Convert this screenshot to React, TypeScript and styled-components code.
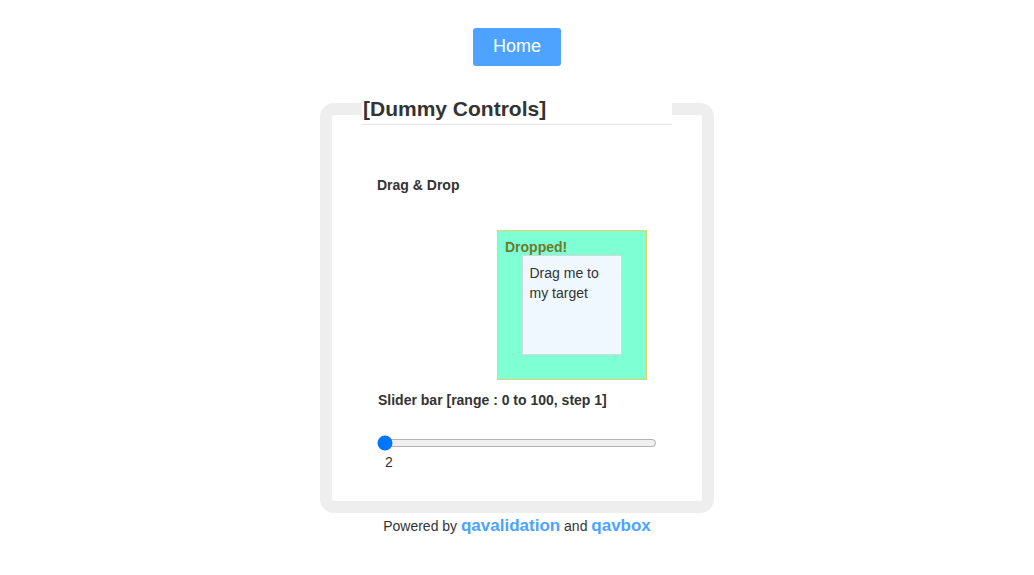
import React, { useState } from "react";
import styled, { createGlobalStyle } from "styled-components";

const GlobalStyle = createGlobalStyle`
  html, body {
    margin: 0;
    padding: 0;
    background: #ffffff;
  }
  body {
    font-family: "Liberation Sans", Arial, sans-serif;
    color: #333333;
  }
`;

function App() {
  const [sliderValue, setSliderValue] = useState(0);

  return (
    <Page>
      <GlobalStyle />
      <TopBar>
        <HomeButton type="button">Home</HomeButton>
      </TopBar>

      <ControlsFieldset>
        <Legend>[Dummy Controls]</Legend>

        <Section>
          <SectionLabel>Drag &amp; Drop</SectionLabel>
          <DragRow>
            <SourceSlot />
            <DropTarget>
              <DropStatus>Dropped!</DropStatus>
              <DraggableBox draggable>Drag me to my target</DraggableBox>
            </DropTarget>
          </DragRow>
        </Section>

        <Section>
          <SliderLabel>Slider bar [range : 0 to 100, step 1]</SliderLabel>
          <Slider
            type="range"
            min={0}
            max={100}
            step={1}
            value={sliderValue}
            onChange={(e) => setSliderValue(Number(e.target.value))}
          />
          <SliderValue>2</SliderValue>
        </Section>
      </ControlsFieldset>

      <Footer>
        Powered by <FooterLink href="#">qavalidation</FooterLink> and{" "}
        <FooterLink href="#">qavbox</FooterLink>
      </Footer>
    </Page>
  );
}

const Page = styled.div`
  display: flex;
  flex-direction: column;
  align-items: center;
  padding-top: 28px;
  min-height: 575px;
  box-sizing: border-box;
`;

const TopBar = styled.div`
  display: flex;
  justify-content: center;
  margin-bottom: 27px;
`;

const HomeButton = styled.button`
  width: 88px;
  height: 38px;
  background: #4da3ff;
  color: #ffffff;
  border: none;
  border-radius: 3px;
  font-family: "Liberation Sans", Arial, sans-serif;
  font-size: 18px;
  line-height: 36px;
  cursor: pointer;
  padding: 0 0 2px 0;
`;

const ControlsFieldset = styled.fieldset`
  box-sizing: border-box;
  width: 393px;
  margin: 0;
  padding: 0 30px 31px 30px;
  border: 12px solid #eeeeee;
  border-radius: 14px;
`;

const Legend = styled.legend`
  box-sizing: border-box;
  width: 310px;
  margin: 0;
  padding: 4px 1px 4px 1px;
  font-size: 21px;
  line-height: 23px;
  font-weight: bold;
  color: #333333;
  border-bottom: 1px solid #e5e5e5;
`;

const Section = styled.div`
  display: flex;
  flex-direction: column;
  align-items: flex-start;
  padding-left: 15px;
`;

const SectionLabel = styled.div`
  margin-top: 52px;
  font-size: 14px;
  line-height: 16px;
  font-weight: bold;
  color: #333333;
`;

const DragRow = styled.div`
  display: flex;
  margin-top: 37px;
`;

const SourceSlot = styled.div`
  width: 120px;
  height: 150px;
`;

const DropTarget = styled.div`
  box-sizing: border-box;
  width: 150px;
  height: 150px;
  padding: 8px 8px 8px 7px;
  background: #7fffd4;
  border: 1px solid #e6d26c;
  display: flex;
  flex-direction: column;
`;

const DropStatus = styled.div`
  font-size: 14px;
  line-height: 16px;
  font-weight: bold;
  color: #6e7a2a;
`;

const DraggableBox = styled.div`
  box-sizing: border-box;
  width: 100px;
  height: 100px;
  margin: 0 auto;
  padding: 7px 7px;
  background: #f0f8ff;
  border: 1px solid #d8d8d8;
  font-size: 14px;
  line-height: 20px;
  color: #333333;
  cursor: move;
`;

const SliderLabel = styled.div`
  margin-top: 12px;
  margin-left: 1px;
  font-size: 14px;
  line-height: 16px;
  font-weight: bold;
  color: #333333;
`;

const Slider = styled.input`
  width: 280px;
  height: 16px;
  margin: 27px 0 0 0;
  accent-color: #0075ff;
`;

const SliderValue = styled.div`
  margin: 3px 0 0 8px;
  font-size: 14px;
  line-height: 16px;
  color: #333333;
`;

const Footer = styled.div`
  margin-top: 4px;
  font-size: 14px;
  line-height: 18px;
  color: #333333;
`;

const FooterLink = styled.a`
  font-size: 17px;
  font-weight: bold;
  color: #4da3ff;
  text-decoration: none;
`;

export default App;
